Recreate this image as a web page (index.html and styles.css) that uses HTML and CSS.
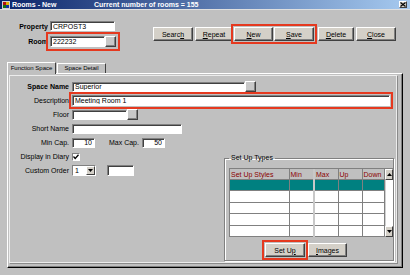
FILE: index.html
```html
<!DOCTYPE html>
<html lang="en">
  <head>
    <meta charset="UTF-8" />
    <title>Rooms - New</title>
    <link rel="stylesheet" href="styles.css">
  </head>
  <body>
    <div class="window">
      <div class="titlebar">
        <svg class="app-icon" width="8" height="8" viewBox="0 0 8 8">
          <rect x="0.5" y="0.5" width="7" height="7" fill="#fff" stroke="#d0d0d0" />
          <rect x="1" y="1" width="3" height="3" fill="#b01010" />
          <rect x="4" y="1" width="3" height="3" fill="#e0b000" />
          <rect x="1" y="4" width="3" height="3" fill="#107010" />
          <rect x="4" y="4" width="3" height="3" fill="#1030a0" />
        </svg>
        <span class="title">Rooms - New</span>
        <span class="count">Current number of rooms = 155</span>
        <span class="close-btn">
          <svg width="6" height="5" viewBox="0 0 6 5"><path d="M0.5 0.5 L5.5 4.5 M5.5 0.5 L0.5 4.5" stroke="#000" stroke-width="1.2" /></svg>
        </span>
      </div>

      <div class="top">
        <div class="ident">
          <label class="strong">Property</label>
          <input class="field w-property" type="text" value="CRPOST3">
          <label class="strong">Room</label>
          <span class="combo mark mark-room">
            <input class="field w-room" type="text" value="222232">
            <span class="lov"></span>
          </span>
        </div>
        <div class="actions">
          <button class="btn w-search">Searc<u>h</u></button>
          <button class="btn w-repeat"><u>R</u>epeat</button>
          <span class="pair mark mark-pair">
            <button class="btn w-new"><u>N</u>ew</button>
            <button class="btn w-save"><u>S</u>ave</button>
          </span>
          <button class="btn w-delete"><u>D</u>elete</button>
          <button class="btn w-close"><u>C</u>lose</button>
        </div>
      </div>

      <div class="tabs">
        <div class="tab active">Function Space</div>
        <div class="tab">Space Detail</div>
      </div>

      <div class="panel">
        <div class="sheet">
          <label class="strong">Space Name</label>
          <span class="combo wide"><input class="field w-space" type="text" value="Superior"><span class="lov"></span></span>

          <label>Description</label>
          <span class="wide"><span class="mark mark-desc"><input class="field w-desc" type="text" value="Meeting Room 1"></span></span>

          <label>Floor</label>
          <span class="combo wide"><input class="field w-floor" type="text"><span class="lov"></span></span>

          <label>Short Name</label>
          <span class="wide"><input class="field w-short" type="text"></span>

          <label>Min Cap.</label>
          <span class="inline">
            <input class="field w-cap num" type="text" value="10">
            <label class="max-label">Max Cap.</label>
            <input class="field w-cap num" type="text" value="50">
          </span>

          <label>Display in Diary</label>
          <span class="inline">
            <span class="check">
              <svg width="6" height="6" viewBox="0 0 6 6"><path d="M0.5 2.5 L2.2 4.5 L5.5 0.8" fill="none" stroke="#000" stroke-width="1.3" /></svg>
            </span>
          </span>

          <label>Custom Order</label>
          <span class="inline">
            <span class="select">
              <span class="select-value">1</span>
              <span class="drop"><svg width="5" height="3" viewBox="0 0 5 3"><path d="M0 0 H5 L2.5 3 Z" fill="#000" /></svg></span>
            </span>
            <input class="field w-order" type="text">
          </span>

          <fieldset class="setup">
            <legend>Set Up Types</legend>
            <div class="styles-grid">
              <table>
                <colgroup>
                  <col style="width: 59px">
                  <col style="width: 25px">
                  <col style="width: 24px">
                  <col style="width: 24px">
                  <col>
                </colgroup>
                <thead>
                  <tr><th>Set Up Styles</th><th>Min</th><th class="split">Max</th><th>Up</th><th>Down</th></tr>
                </thead>
                <tbody>
                  <tr class="selected"><td></td><td></td><td class="split"></td><td></td><td></td></tr>
                  <tr><td></td><td></td><td class="split"></td><td></td><td></td></tr>
                  <tr><td></td><td></td><td class="split"></td><td></td><td></td></tr>
                  <tr><td></td><td></td><td class="split"></td><td></td><td></td></tr>
                  <tr><td></td><td></td><td class="split"></td><td></td><td></td></tr>
                </tbody>
              </table>
              <div class="scrollbar">
                <span class="arrow"><svg width="5" height="3" viewBox="0 0 5 3"><path d="M0 3 H5 L2.5 0 Z" fill="#000" /></svg></span>
                <span class="track"></span>
                <span class="arrow"><svg width="5" height="3" viewBox="0 0 5 3"><path d="M0 0 H5 L2.5 3 Z" fill="#000" /></svg></span>
              </div>
            </div>
            <div class="setup-buttons">
              <span class="mark mark-setup"><button class="btn w-setup">Set U<u>p</u></button></span>
              <button class="btn w-images"><u>I</u>mages</button>
            </div>
          </fieldset>
        </div>
      </div>
    </div>
  </body>
</html>
```

FILE: styles.css
```css
body {
  margin: 0;
  background: #c0c0c0;
  font-family: "Liberation Sans", Arial, sans-serif;
  font-size: 7px;
  color: #000;
}

.window {
  width: 410px;
  height: 275px;
  overflow: hidden;
  background: #c0c0c0;
}

/* title bar */

.titlebar {
  display: flex;
  align-items: center;
  height: 9px;
  padding: 0 3px 0 2px;
  background: linear-gradient(90deg, #0a246a, #a6caf0);
  border-bottom: 1px solid #dfdfdf;
  color: #fff;
  font-weight: bold;
}

.app-icon {
  margin-right: 2px;
}

.title {
  width: 82px;
}

.close-btn {
  display: flex;
  align-items: center;
  justify-content: center;
  width: 8px;
  height: 7px;
  margin-left: auto;
  box-sizing: border-box;
  background: #d4d0c8;
  border: 1px solid;
  border-color: #fff #404040 #404040 #fff;
}

/* common controls */

label {
  text-align: right;
  white-space: nowrap;
  align-self: center;
}

.strong {
  font-weight: bold;
}

.field {
  box-sizing: border-box;
  height: 11px;
  margin: 0;
  padding: 0 2px;
  font: 7px "Liberation Sans", Arial, sans-serif;
  color: #000;
  background: #fff;
  border: 1px solid;
  border-color: #808080 #fff #fff #808080;
  box-shadow: inset 1px 1px 0 #404040;
  outline: none;
}

.num {
  text-align: right;
}

.combo {
  display: flex;
  align-items: center;
}

.lov {
  box-sizing: border-box;
  width: 11px;
  height: 11px;
  background: #c8c8c8;
  border: 1px solid;
  border-color: #fff #404040 #404040 #fff;
  box-shadow: inset -1px -1px 0 #808080;
}

.btn {
  box-sizing: border-box;
  height: 14px;
  padding: 0;
  font: 7px "Liberation Sans", Arial, sans-serif;
  color: #000;
  background: #d4d0c8;
  border: 1px solid;
  border-color: #fff #404040 #404040 #fff;
  box-shadow: inset -1px -1px 0 #808080;
}

.mark {
  outline: 2px solid #e5391f;
}

/* header area */

.top {
  display: flex;
  height: 52px;
  box-sizing: border-box;
  padding: 11px 14px 0 0;
}

.ident {
  display: grid;
  grid-template-columns: 48px auto;
  grid-auto-rows: 11px;
  column-gap: 2px;
  row-gap: 4px;
  align-content: start;
}

.w-property {
  width: 65px;
  height: 10px;
}

.w-room {
  width: 55px;
}

.mark-room {
  outline-offset: 2px;
}

.actions {
  display: flex;
  align-items: flex-start;
  margin-left: auto;
  padding-top: 6px;
}

.pair {
  display: flex;
  gap: 1px;
  margin-left: 1px;
  outline-offset: 1px;
}

.w-search { width: 40px; }
.w-repeat { width: 38px; margin-left: 2px; }
.w-new { width: 39px; }
.w-save { width: 40px; }
.w-delete { width: 36px; margin-left: 4px; }
.w-close { width: 40px; margin-left: 2px; }

/* tabs */

.tabs {
  display: flex;
  align-items: flex-end;
  height: 11px;
  padding-left: 7px;
  position: relative;
  z-index: 1;
}

.tab {
  box-sizing: border-box;
  width: 49px;
  height: 10px;
  margin-left: 1px;
  border: 1px solid;
  border-bottom: none;
  border-color: #fff #404040 #404040 #fff;
  font-size: 6px;
  white-space: nowrap;
  text-align: center;
  line-height: 9px;
}

.tab.active {
  height: 12px;
  margin-left: 0;
  margin-bottom: -1px;
  background: #c0c0c0;
  line-height: 10px;
}

/* function space panel */

.panel {
  display: flex;
  box-sizing: border-box;
  width: 396px;
  height: 195px;
  margin-left: 7px;
  border: 1px solid;
  border-color: #fff #000 #000 #fff;
  box-shadow: inset -1px -1px 0 #808080;
}

.sheet {
  flex: 1;
  display: grid;
  grid-template-columns: 59px 149px 170px;
  grid-template-rows: repeat(7, 11px) 1fr;
  column-gap: 3px;
  row-gap: 3px;
  margin: 1px 5px 4px 1px;
  padding: 5px 2px 1px 0;
  border: 1px solid #ececec;
  box-shadow: 1px 1px 0 #8a8a8a;
}

.sheet > label {
  grid-column: 1;
}

.sheet > .wide {
  grid-column: 2 / span 2;
  align-self: center;
}

.sheet > .inline {
  grid-column: 2;
  display: flex;
  align-items: center;
}

.mark-desc {
  display: inline-block;
  vertical-align: top;
  outline-offset: 1px;
}

.w-space { width: 173px; height: 10px; }
.w-desc { width: 318px; display: block; }
.w-floor { width: 55px; height: 10px; }
.w-short { width: 110px; height: 10px; display: block; }
.w-cap { width: 23px; height: 10px; }
.w-order { width: 27px; margin-left: 11px; }

.max-label {
  margin: 0 3px 0 14px;
}

.check {
  display: flex;
  align-items: center;
  justify-content: center;
  box-sizing: border-box;
  width: 8px;
  height: 8px;
  background: #fff;
  border: 1px solid;
  border-color: #808080 #fff #fff #808080;
}

.select {
  display: flex;
  box-sizing: border-box;
  width: 24px;
  height: 11px;
  background: #fff;
  border: 1px solid;
  border-color: #808080 #fff #fff #808080;
}

.select-value {
  flex: 1;
  padding-left: 2px;
  line-height: 9px;
}

.drop {
  display: flex;
  align-items: center;
  justify-content: center;
  box-sizing: border-box;
  width: 9px;
  background: #d4d0c8;
  border: 1px solid;
  border-color: #fff #404040 #404040 #fff;
}

/* set up types */

.setup {
  grid-column: 3;
  grid-row: 6 / span 3;
  min-width: 0;
  margin: 3px 0 0;
  padding: 0 0 2px 4px;
  border: 1px solid #808080;
  box-shadow: inset 1px 1px 0 #fff, 1px 1px 0 #fff;
}

.setup legend {
  padding: 0 2px;
  line-height: 8px;
}

.styles-grid {
  display: flex;
  height: 69px;
  margin-top: 6px;
  box-sizing: border-box;
  border-top: 1px solid #808080;
  border-left: 1px solid #808080;
}

.styles-grid table {
  width: 155px;
  table-layout: fixed;
  border-collapse: collapse;
}

.styles-grid th {
  height: 10px;
  padding: 0 0 0 1px;
  font-weight: normal;
  text-align: left;
  color: #8b0000;
  border-right: 1px solid #808080;
  border-bottom: 1px solid #808080;
}

.styles-grid td {
  background: #fff;
  border-right: 1px solid #808080;
  border-bottom: 1px solid #808080;
}

.styles-grid .split {
  border-left: 2px solid #c8c8c8;
}

.styles-grid tr.selected td {
  background: #008080;
}

.scrollbar {
  display: flex;
  flex-direction: column;
  width: 8px;
}

.arrow {
  display: flex;
  align-items: center;
  justify-content: center;
  box-sizing: border-box;
  height: 11px;
  background: #d4d0c8;
  border: 1px solid;
  border-color: #fff #404040 #404040 #fff;
}

.track {
  flex: 1;
  background: #fff;
  border-left: 1px solid #d0d0d0;
}

.setup-buttons {
  display: flex;
  gap: 3px;
  margin-top: 6px;
  padding-left: 36px;
}

.mark-setup {
  display: inline-flex;
  outline-offset: 1px;
}

.w-setup { width: 40px; }
.w-images { width: 39px; }
```
